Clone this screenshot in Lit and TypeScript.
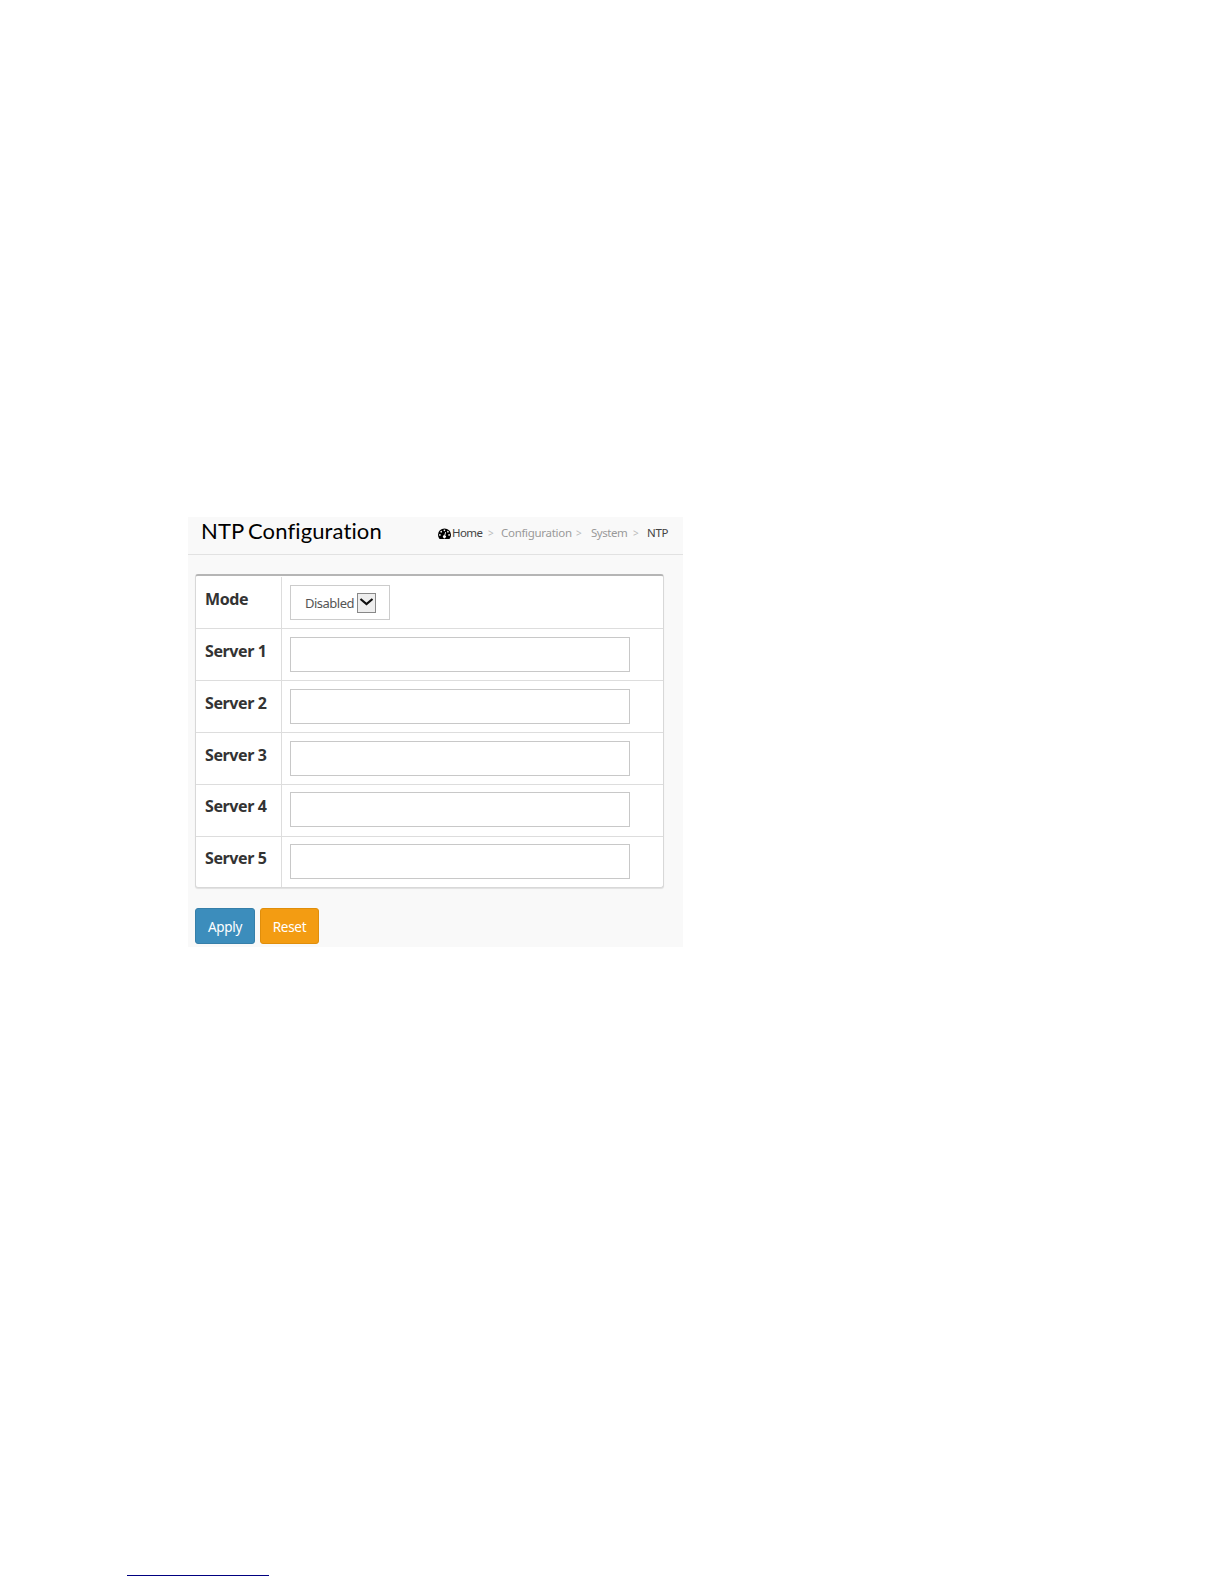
import { LitElement, html, css } from "lit";
import { customElement, property } from "lit/decorators.js";

@customElement("ntp-breadcrumb")
class NtpBreadcrumb extends LitElement {
  static styles = css`
    :host {
      display: block;
    }
    nav {
      display: flex;
      align-items: center;
      font-family: "Noto Sans", sans-serif;
      font-size: 11.5px;
      line-height: 16px;
      color: #999;
      white-space: nowrap;
    }
    .icon {
      width: 13px;
      height: 11px;
      margin-right: 1px;
    }
    .home {
      width: 31px;
      color: #444;
      letter-spacing: -0.6px;
    }
    .sep {
      color: #bbb;
      font-size: 10px;
      width: 6px;
      margin-left: 5px;
    }
    .config {
      width: 70px;
      margin-left: 7px;
      letter-spacing: -0.3px;
    }
    .system {
      width: 37px;
      margin-left: 9px;
      letter-spacing: -0.45px;
    }
    .current {
      margin-left: 8px;
      color: #444;
      letter-spacing: -0.3px;
    }
  `;

  render() {
    return html`
      <nav>
        <svg class="icon" viewBox="0 0 13 11">
          <path d="M6.5 0.5A6.5 6.2 0 0 0 0 6.7c0 1.5.4 2.8 1.2 3.9.1.2.3.3.5.3h9.6c.2 0 .4-.1.5-.3A6.6 6.6 0 0 0 13 6.7 6.5 6.2 0 0 0 6.5 0.5z" fill="#000" />
          <g fill="#fafafa">
            <circle cx="1.9" cy="6.9" r="0.85" />
            <circle cx="3.2" cy="3.7" r="0.85" />
            <circle cx="6.4" cy="2.3" r="0.85" />
            <circle cx="9.9" cy="3.7" r="0.85" />
            <circle cx="11.1" cy="6.9" r="0.85" />
            <path d="M7.2 4l.9.3-.9 3.1a1.5 1.5 0 1 1-.9-.2z" />
          </g>
        </svg>
        <span class="home">Home</span>
        <span class="sep">&gt;</span>
        <span class="config">Configuration</span>
        <span class="sep">&gt;</span>
        <span class="system">System</span>
        <span class="sep">&gt;</span>
        <span class="current">NTP</span>
      </nav>
    `;
  }
}

@customElement("config-row")
class ConfigRow extends LitElement {
  static styles = css`
    :host {
      display: block;
    }
    .row {
      display: flex;
      height: 52px;
      box-sizing: border-box;
      border-bottom: 1px solid #ddd;
    }
    .label {
      width: 86px;
      box-sizing: border-box;
      padding: 10px 0 0 9px;
      border-right: 1px solid #ddd;
      color: #333;
      font: bold 16px/24px "Noto Sans", sans-serif;
      letter-spacing: -0.4px;
      white-space: nowrap;
    }
    .value {
      padding: 8px 0 0 8px;
    }
    :host([tight]) .label {
      padding-top: 9px;
    }
    :host([tight]) .value {
      padding-top: 7px;
    }
  `;

  @property() label = "";
  @property({ type: Boolean }) tight = false;

  render() {
    return html`
      <div class="row">
        <div class="label">${this.label}</div>
        <div class="value"><slot></slot></div>
      </div>
    `;
  }
}

@customElement("app-root")
class AppRoot extends LitElement {
  static styles = css`
    :host {
      display: block;
      height: 1584px;
      background: #fff;
      overflow: hidden;
    }
    .page {
      display: flex;
      flex-direction: column;
      align-items: flex-start;
      padding: 517px 0 0 127px;
    }
    .panel {
      width: 495px;
      height: 430px;
      margin-left: 61px;
      background: #f9f9f9;
    }
    .header {
      display: flex;
      justify-content: space-between;
      height: 38px;
      box-sizing: border-box;
      padding: 0 14px 0 13px;
      border-bottom: 1px solid #e2e2e2;
    }
    h1 {
      margin: 0;
      color: #000;
      font: 400 22px/27px Lato, sans-serif;
      letter-spacing: 0.12px;
      word-spacing: -1.5px;
      white-space: nowrap;
    }
    ntp-breadcrumb {
      width: 231px;
      padding-top: 8px;
    }
    .box {
      width: 469px;
      height: 314px;
      box-sizing: border-box;
      margin: 19px 0 0 7px;
      padding-top: 1px;
      background: #fff;
      border: 1px solid #d8d8d8;
      border-top: 2px solid #b5b5b5;
      border-radius: 3px;
      box-shadow: 0 1px 1px rgba(0, 0, 0, 0.1);
      overflow: hidden;
    }
    .select {
      display: flex;
      align-items: center;
      width: 100px;
      height: 35px;
      box-sizing: border-box;
      padding-left: 14px;
      border: 1px solid #ccc;
      color: #555;
      font: 13px/18px "Noto Sans", sans-serif;
      letter-spacing: -0.5px;
    }
    .select span {
      width: 52px;
    }
    .arrow {
      width: 19px;
      height: 20px;
    }
    .field {
      display: block;
      width: 340px;
      height: 35px;
      box-sizing: border-box;
      margin: 0;
      padding: 6px 12px;
      border: 1px solid #c8c8c8;
      border-radius: 0;
      background: #fff;
    }
    .buttons {
      display: flex;
      gap: 5px;
      padding: 20px 0 0 7px;
    }
    .btn {
      height: 36px;
      box-sizing: border-box;
      padding: 1px 0 0;
      border-radius: 3px;
      color: #fff;
      font: 13.5px/20px "Noto Sans", sans-serif;
      letter-spacing: -0.3px;
    }
    .apply {
      width: 60px;
      background: #3c8dbc;
      border: 1px solid #367fa9;
    }
    .reset {
      width: 59px;
      background: #f39c12;
      border: 1px solid #e08e0b;
    }
    .rule {
      width: 142px;
      height: 1px;
      margin-top: 628px;
      background: #000080;
    }
  `;

  servers = [1, 2, 3, 4, 5];

  render() {
    return html`
      <div class="page">
        <div class="panel">
          <div class="header">
            <h1>NTP Configuration</h1>
            <ntp-breadcrumb></ntp-breadcrumb>
          </div>
          <div class="box">
            <config-row label="Mode">
              <div class="select">
                <span>Disabled</span>
                <svg class="arrow" viewBox="0 0 19 20">
                  <rect x="0.5" y="0.5" width="18" height="19" fill="#eee" stroke="#888" />
                  <path d="M3.5 6l6 5 6-5" fill="none" stroke="#111" stroke-width="2.2" />
                </svg>
              </div>
            </config-row>
            ${this.servers.map(
              (n) => html`
                <config-row label="Server ${n}" ?tight=${n > 3}>
                  <input class="field" type="text" />
                </config-row>
              `
            )}
          </div>
          <div class="buttons">
            <button class="btn apply">Apply</button>
            <button class="btn reset">Reset</button>
          </div>
        </div>
        <div class="rule"></div>
      </div>
    `;
  }
}
